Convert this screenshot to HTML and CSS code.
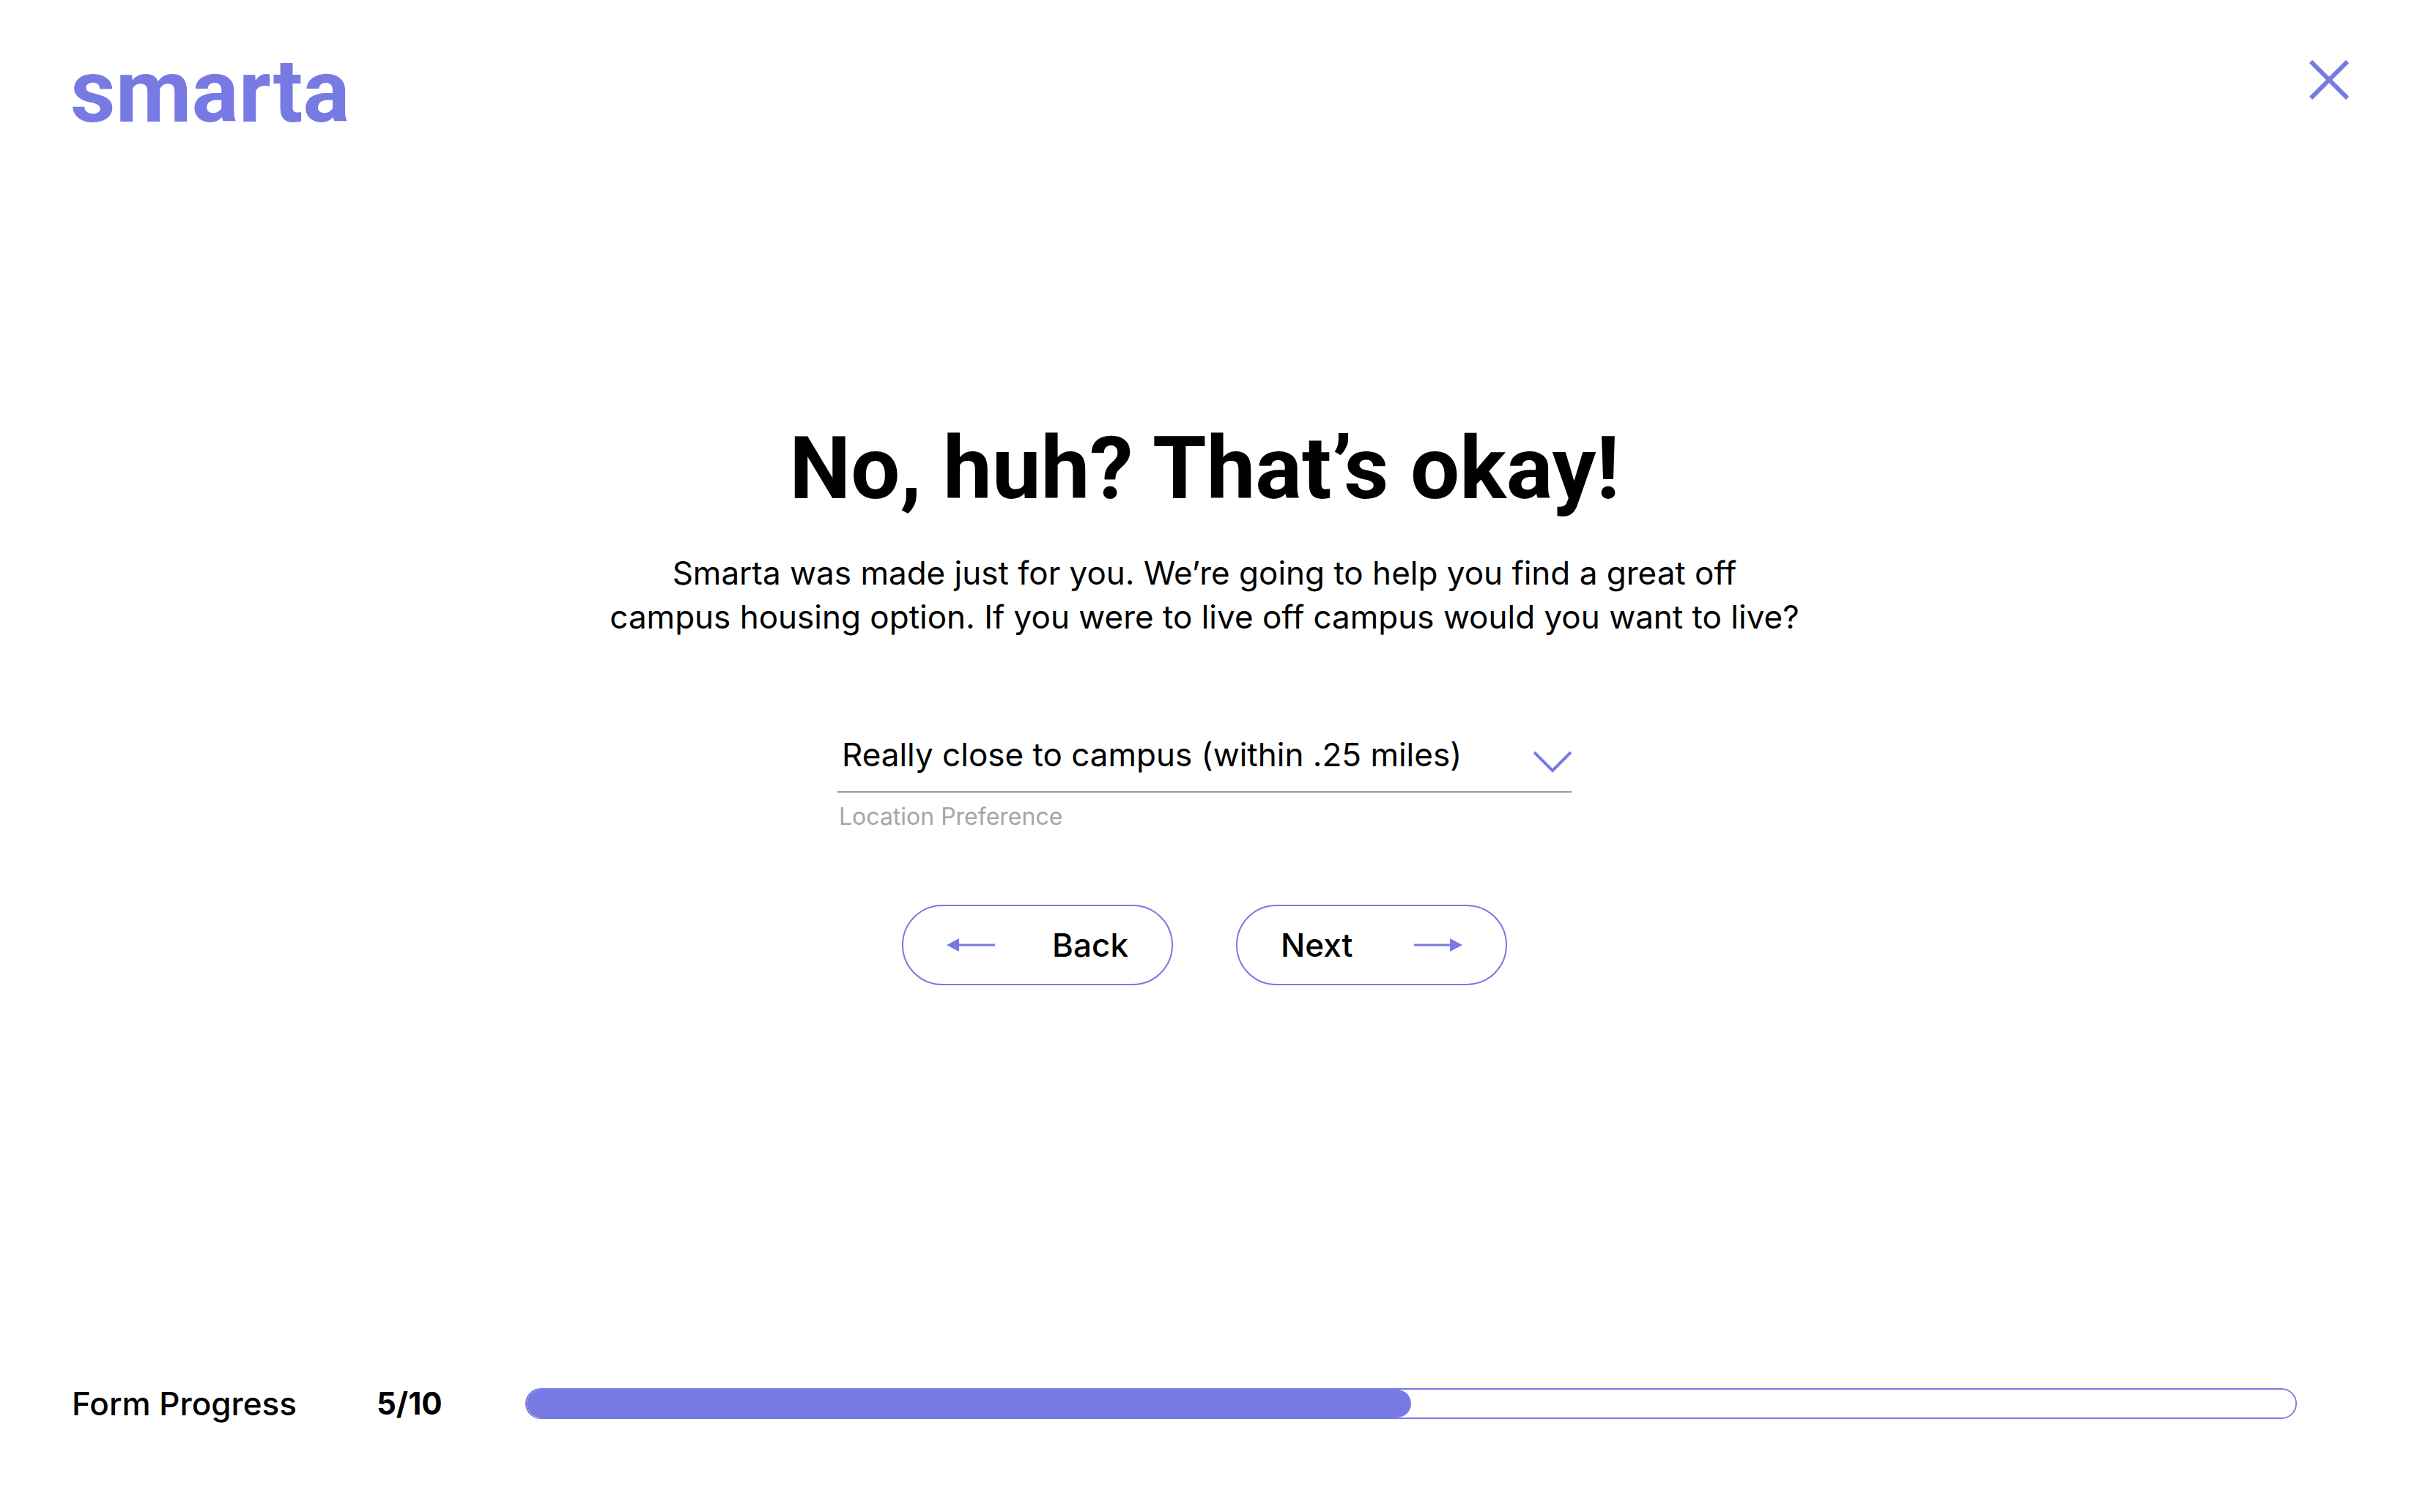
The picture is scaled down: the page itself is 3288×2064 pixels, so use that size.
FILE: index.html
```html
<!DOCTYPE html>
<html lang="en">
<head>
<meta charset="utf-8">
<meta name="viewport" content="width=device-width, initial-scale=1">
<title>Smarta</title>
<link rel="stylesheet" href="styles.css">
</head>
<body>
<header class="header">
  <a class="logo" href="#">smarta</a>
  <button class="close" type="button" aria-label="Close">
    <svg width="54" height="54" viewBox="0 0 54 54" fill="none" stroke="currentColor" stroke-width="6"><path d="M2 2l50 50M52 2L2 52"/></svg>
  </button>
</header>
<main class="main">
  <h1 class="title">No, huh? That’s okay!</h1>
  <p class="intro">Smarta was made just for you. We’re going to help you find a great off<br>campus housing option. If you were to live off campus would you want to live?</p>
  <form class="form">
    <div class="field">
      <div class="select-wrap">
        <select class="select" id="location">
          <option>Really close to campus (within .25 miles)</option>
        </select>
        <svg class="chevron" width="52" height="32" viewBox="0 0 52 32" fill="none" stroke="currentColor" stroke-width="4"><path d="M1 2l25 25L51 2"/></svg>
      </div>
      <label class="label" for="location">Location Preference</label>
    </div>
    <div class="actions">
      <button class="button" type="button">
        <svg width="66" height="18" viewBox="0 0 66 18" fill="currentColor"><path d="M0 9L17 0v7.500h49v3H17V18z"/></svg>
        Back
      </button>
      <button class="button" type="button">
        Next
        <svg width="66" height="18" viewBox="0 0 66 18" fill="currentColor"><path d="M66 9L49 0v7.500H0v3h49V18z"/></svg>
      </button>
    </div>
  </form>
</main>
<footer class="footer">
  <label class="progress-label" for="progress">Form Progress</label>
  <span class="count">5/10</span>
  <progress class="progress" id="progress" value="5" max="10"></progress>
</footer>
</body>
</html>
```
FILE: styles.css
```css
* {
  box-sizing: border-box;
}

body {
  --accent: #787ae3;
  display: flex;
  flex-direction: column;
  min-height: 100vh;
  margin: 0;
  background: #fff;
  color: #000;
  font-family: Inter, "Open Sans", sans-serif;
  font-size: 44px;
  line-height: 60px;
}

button,
select {
  font: inherit;
  color: inherit;
  background: none;
  border: 0;
  margin: 0;
  padding: 0;
}

svg {
  display: block;
  flex: none;
}

.header {
  display: flex;
  justify-content: space-between;
  align-items: flex-start;
  padding: 65px 65px 0 96px;
}

.logo {
  color: var(--accent);
  font: 700 120px/120px Roboto, sans-serif;
  text-decoration: none;
}

.close {
  padding: 17px;
  color: var(--accent);
}

.main {
  flex: 1;
  padding: 395px 32px 0;
  text-align: center;
}

.title {
  margin: 0;
  font: 700 119px/120px Roboto, sans-serif;
}

.intro {
  margin: 52px 0 128px;
}

.field {
  width: 100%;
  max-width: 1002px;
  margin: 0 auto;
  text-align: left;
}

.select-wrap {
  display: grid;
  align-items: center;
}

.select-wrap > * {
  grid-area: 1 / 1;
}

.select {
  appearance: none;
  width: 100%;
  padding: 0 70px 20px 6px;
  border-bottom: 2px solid #999;
  border-radius: 0;
}

.chevron {
  justify-self: end;
  color: var(--accent);
  pointer-events: none;
}

.label {
  display: block;
  margin-top: 15px;
  padding-left: 2px;
  color: #a6a6a6;
  font-size: 32px;
  line-height: 36px;
}

.actions {
  display: flex;
  justify-content: center;
  gap: 86px;
  margin-top: 102px;
}

.button {
  display: flex;
  justify-content: space-between;
  align-items: center;
  width: 370px;
  height: 110px;
  padding: 0 59px;
  border: 2px solid var(--accent);
  border-radius: 55px;
  font-weight: 500;
}

.button svg {
  color: var(--accent);
}

.footer {
  display: flex;
  align-items: center;
  padding: 0 153px 118px 98px;
}

.progress-label {
  min-width: 416px;
  font-weight: 500;
}

.count {
  min-width: 203px;
  font-size: 42px;
  font-weight: 700;
}

.progress {
  appearance: none;
  flex: 1;
  height: 42px;
  overflow: hidden;
  border: 2px solid var(--accent);
  border-radius: 21px;
  background: #fff;
}

.progress::-webkit-progress-bar {
  background: #fff;
}

.progress::-webkit-progress-value {
  background: var(--accent);
  border-radius: 0 21px 21px 0;
}
```
